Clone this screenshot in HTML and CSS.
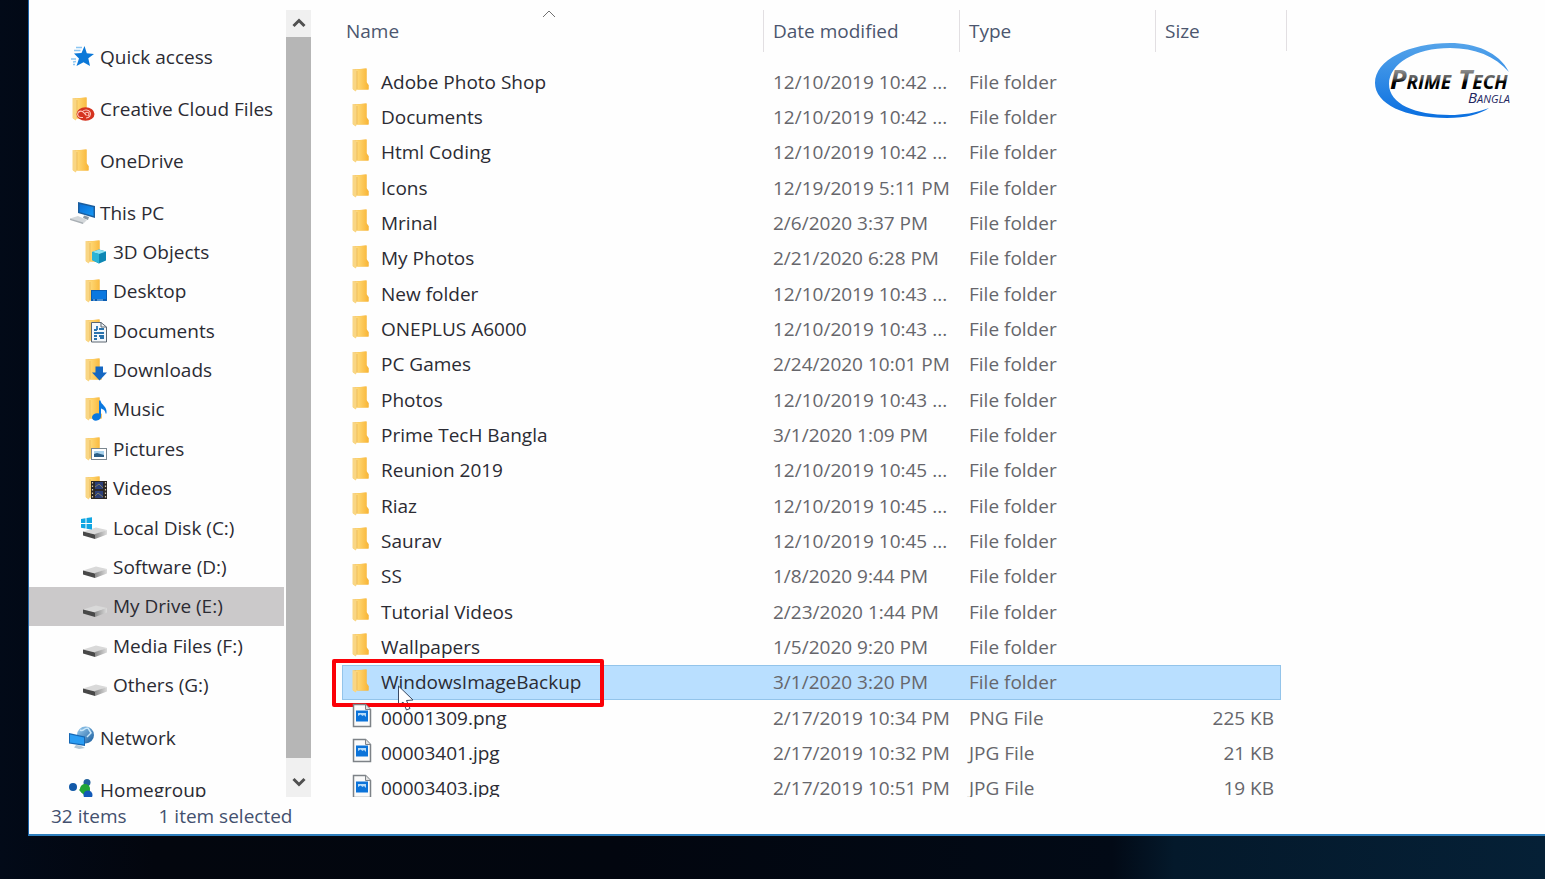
FILE: index.html
```
<!DOCTYPE html>
<html lang="en">
<head>
    <meta charset="utf-8">
    <title>My Drive (E:)</title>
    <link rel="stylesheet" href="styles.css">
</head>
<body>

<svg class="sprite" aria-hidden="true">
    <defs>
        <linearGradient id="gold"><stop offset="0" stop-color="#ffdc7d"/><stop offset="1" stop-color="#f9b535"/></linearGradient>
        <linearGradient id="blue" x2="1" y2="1"><stop offset="0" stop-color="#0a6fd6"/><stop offset="1" stop-color="#1698f5"/></linearGradient>
        <linearGradient id="steel"><stop offset="0" stop-color="#8a8a8a"/><stop offset="1" stop-color="#dcdcdc"/></linearGradient>
        <linearGradient id="globe" x2="1" y2="1"><stop offset="0" stop-color="#9fd0f2"/><stop offset="1" stop-color="#155a9c"/></linearGradient>
    </defs>
    <symbol id="folder" viewBox="0 0 26 26">
        <path d="M3 2.5 L16.500 1.500 V15 L18.500 18 V22.500 H3Z" fill="#f3b53c"/>
        <path d="M6 2.500 L16.500 1.500 V16 L18.500 18 V22.500 H7Z" fill="url(#gold)"/>
        <path d="M2.500 2 L7 3.500 V22.500 L5.500 24.500 L2.500 22Z" fill="#f9d684"/>
        <path d="M7 4 V22" stroke="#eab34a" stroke-width="0.700"/>
    </symbol>
    <symbol id="star" viewBox="0 0 26 26">
        <path d="M14.500 2 L16.800 9.300 L24 10 L18.300 14.300 L20 22 L13.500 18.300 L6.500 22 L9 14.500 L4 9.500 L11.500 9Z" fill="#0b78d8"/>
        <path d="M6 3.500 H12 M4 6.500 H10.500 M1 15 H6 M3 18 L6 17.500 M3 20.500 H5" stroke="#8cc6f2" stroke-width="1.300"/>
    </symbol>
    <symbol id="cc" viewBox="0 0 26 26">
        <use href="#folder"/>
        <ellipse cx="15.500" cy="18" rx="9" ry="6.800" fill="#d5331f"/>
        <path d="M13 21.500 H11 A3.200 3.200 0 1 1 13.500 16.500 L16.500 19.500 M12.500 15.500 A4.500 4 0 1 1 16 22 M15 18 A2 1.800 0 1 1 17.500 19.800" fill="none" stroke="#ffc9bd" stroke-width="1.100"/>
    </symbol>
    <symbol id="pc" viewBox="0 0 26 26">
        <path d="M8 2 L25 6 V18 L8 13Z" fill="#1b5d9d"/>
        <path d="M9.500 4 L23.500 7.200 V16 L9.500 12Z" fill="url(#blue)"/>
        <path d="M14 15.500 L19 17 L18 20 L13 18Z" fill="#8b98a3"/>
        <path d="M0 18.500 L8 16 L17 20 L13 24Z" fill="#d3d7da"/>
        <path d="M0 18.500 L13 22.500 V24 L0 20Z" fill="#a9afb4"/>
    </symbol>
    <symbol id="cube" viewBox="0 0 26 26">
        <use href="#folder"/>
        <path d="M9 13 L16 10.500 L23 12.500 V21.500 L16 24.500 L9 21Z" fill="#0d87b4"/>
        <path d="M9 13 L16 10.500 L23 12.500 L16 15Z" fill="#8be3f2"/>
        <path d="M9 13 L16 15 V24.500 L9 21Z" fill="#2ab4d6"/>
    </symbol>
    <symbol id="desk" viewBox="0 0 26 26">
        <use href="#folder"/>
        <rect x="8" y="12" width="16" height="11" fill="#0b5cb0"/>
        <rect x="9" y="13" width="14" height="8" fill="#0a78e0"/>
        <path d="M10 22 H12 M14 22 H20" stroke="#8cc4f5"/>
    </symbol>
    <symbol id="docs" viewBox="0 0 26 26">
        <use href="#folder"/>
        <path d="M8.500 4.500 H18 L23.500 9 V24 H8.500Z" fill="#f4f8fb" stroke="#5c6670"/>
        <path d="M18 4.500 V9 H23.500" fill="none" stroke="#5c6670"/>
        <path d="M11 12 H14 M14 8 V12 M16 11 H21 M11 15 H21 M11 18 H14 M16 18 H21 M11 21 H14 M17 20 H21" stroke="#2a73ad" stroke-width="1.800"/>
    </symbol>
    <symbol id="down" viewBox="0 0 26 26">
        <use href="#folder"/>
        <path d="M12.500 9.500 H20 V15.500 H24 L16.500 23.500 L9 15.500 H12.500Z" fill="#1467c2"/>
    </symbol>
    <symbol id="note" viewBox="0 0 26 26">
        <use href="#folder"/>
        <path d="M16 4.500 H17.500 C18 9 24.500 10 23.500 17.500 H22.500 C22.500 14 20 13.500 18 12.500 V20 C18 26 8.500 26 9 21 C9.500 17.500 13.500 16.500 16 17.500Z" fill="#0a78e0"/>
    </symbol>
    <symbol id="pics" viewBox="0 0 26 26">
        <use href="#folder"/>
        <rect x="8.500" y="12.500" width="15" height="11" fill="#fff" stroke="#7b8790"/>
        <rect x="11" y="15" width="10" height="6" fill="#a9d3ee"/>
        <path d="M11 21 V18 L14 17 L21 19 V21Z" fill="#2c5f86"/>
    </symbol>
    <symbol id="film" viewBox="0 0 26 26">
        <use href="#folder"/>
        <rect x="8" y="6" width="16" height="18" fill="#2b2725"/>
        <path d="M9.500 7 V24 M22.500 7 V24" stroke="#d9cdb4" stroke-width="1.200" stroke-dasharray="1.500 2"/>
        <path d="M12 7 H20 V14 H12Z M12 16 H20 V23 H12Z" fill="#2c3f78"/>
        <path d="M12 12 L16 9 L20 13 M12 21 L15 18 L20 22" stroke="#7e7c62" fill="none"/>
    </symbol>
    <symbol id="drive" viewBox="0 0 26 26">
        <path d="M0 16.500 L13 12.500 L24 15 L12 19.500Z" fill="#d9d9d9"/>
        <path d="M12 19 L24 15 V19.500 L12 24Z" fill="url(#steel)"/>
        <path d="M0 16.500 L12 19.500 V24 L0 20.500Z" fill="#484848"/>
    </symbol>
    <symbol id="windrive" viewBox="0 0 26 26">
        <use href="#drive"/>
        <path d="M-2 4 L2.500 3.300 V8 H-2Z M3.500 3.100 L9 2.300 V8 H3.500Z M-2 9 H2.500 V13.500 L-2 12.800Z M3.500 9 H9 V14.500 L3.500 13.700Z" fill="#10a6e2"/>
    </symbol>
    <symbol id="net" viewBox="0 0 26 26">
        <circle cx="15.500" cy="10" r="8.500" fill="url(#globe)"/>
        <path d="M10 5 C14 7 13 3 18 3 L21 8 L17 12" fill="none" stroke="#c9e7fa" stroke-width="1.500"/>
        <path d="M-1 8 L15 11.500 V21 L-1 18.500Z" fill="#1567b4"/>
        <path d="M0 9.500 L14 12.500 V19.500 L0 17.500Z" fill="#2a9df4"/>
        <path d="M6 20 L10 20.500 L15 23 L9 24 L4 22.500Z" fill="#b4c6d3"/>
    </symbol>
    <symbol id="home" viewBox="0 0 26 26">
        <path d="M9 13 L18 3 L21 20 L17 21Z" fill="#27a53c"/>
        <circle cx="3" cy="10" r="4" fill="#1259a8"/>
        <circle cx="17" cy="5.500" r="3.500" fill="#23629c"/>
        <circle cx="15" cy="12" r="5" fill="#23a636"/>
        <circle cx="18" cy="18" r="4.500" fill="#1259b8"/>
    </symbol>
    <symbol id="image" viewBox="0 0 26 26">
        <path d="M3.500 1.500 H15.500 L20.500 6.500 V23.500 H3.500Z" fill="#fafafa" stroke="#7d8287" stroke-width="1.500"/>
        <path d="M15.500 1.500 V6.500 H20.500" fill="#e0e0e0" stroke="#7d8287"/>
        <rect x="6" y="7.500" width="12" height="11" fill="#0b73d9"/>
        <path d="M8 10 H16 V14 L14 12 L12.500 13 L10.500 11.500 L8 13Z" fill="#b5daf8"/>
    </symbol>
</svg>

<main class="window">
    <div class="content">
        <nav class="sidebar">
            <ul class="tree">
                <li><a href="#"><svg class="icon"><use href="#star"/></svg>Quick access</a></li>
                <li><a href="#"><svg class="icon"><use href="#cc"/></svg>Creative Cloud Files</a></li>
                <li><a href="#"><svg class="icon"><use href="#folder"/></svg>OneDrive</a></li>
                <li>
                    <a href="#"><svg class="icon"><use href="#pc"/></svg>This PC</a>
                    <ul class="subtree">
                        <li><a href="#"><svg class="icon"><use href="#cube"/></svg>3D Objects</a></li>
                        <li><a href="#"><svg class="icon"><use href="#desk"/></svg>Desktop</a></li>
                        <li><a href="#"><svg class="icon"><use href="#docs"/></svg>Documents</a></li>
                        <li><a href="#"><svg class="icon"><use href="#down"/></svg>Downloads</a></li>
                        <li><a href="#"><svg class="icon"><use href="#note"/></svg>Music</a></li>
                        <li><a href="#"><svg class="icon"><use href="#pics"/></svg>Pictures</a></li>
                        <li><a href="#"><svg class="icon"><use href="#film"/></svg>Videos</a></li>
                        <li><a href="#"><svg class="icon"><use href="#windrive"/></svg>Local Disk (C:)</a></li>
                        <li><a href="#"><svg class="icon"><use href="#drive"/></svg>Software (D:)</a></li>
                        <li><a href="#" class="current"><svg class="icon"><use href="#drive"/></svg>My Drive (E:)</a></li>
                        <li><a href="#"><svg class="icon"><use href="#drive"/></svg>Media Files (F:)</a></li>
                        <li><a href="#"><svg class="icon"><use href="#drive"/></svg>Others (G:)</a></li>
                    </ul>
                </li>
                <li><a href="#"><svg class="icon"><use href="#net"/></svg>Network</a></li>
                <li><a href="#"><svg class="icon"><use href="#home"/></svg>Homegroup</a></li>
            </ul>
        </nav>

        <div class="scrollbar">
            <button class="arrow-up" aria-label="Scroll up"><svg width="14" height="10" viewBox="0 0 14 10"><path d="M1.500 8 L7 2.500 L12.500 8"/></svg></button>
            <div class="thumb"></div>
            <button class="arrow-down" aria-label="Scroll down"><svg width="14" height="10" viewBox="0 0 14 10"><path d="M1.500 2 L7 7.500 L12.500 2"/></svg></button>
        </div>

        <section class="files">
            <table>
                <thead>
                    <tr>
                        <th class="name"><span>Name</span><svg class="sort" width="14" height="8" viewBox="0 0 14 8"><path d="M1 7 L7 1 L13 7"/></svg></th>
                        <th class="date"><span>Date modified</span></th>
                        <th class="type"><span>Type</span></th>
                        <th class="size"><span>Size</span></th>
                    </tr>
                </thead>
                <tbody id="rows"></tbody>
            </table>
        </section>
    </div>

    <footer class="status"><span>32 items</span><span>1 item selected</span></footer>
</main>

<svg class="logo" width="140" height="78" viewBox="0 0 140 78">
    <defs>
        <linearGradient id="ring" x2="0" y2="1"><stop offset="0" stop-color="#55a4ea"/><stop offset="1" stop-color="#0a6fe0"/></linearGradient>
        <linearGradient id="chrome" x2="0" y2="1"><stop offset="0.200" stop-color="#a0a0a0"/><stop offset="0.500" stop-color="#555"/><stop offset="0.600" stop-color="#000"/></linearGradient>
    </defs>
    <path d="M134 30 C124 10 100 1 75 1 C34 1 0 18 0 41 C0 62 30 76 72 76 C92 76 105 72 114 66 C100 71 88 73 75 73 C40 73 14 62 14 42 C14 22 40 6 75 6 C100 6 120 14 134 30Z" fill="url(#ring)"/>
    <text class="brand" x="15" y="47" fill="url(#chrome)">P<tspan class="small">RIME</tspan></text>
    <text class="brand" x="83" y="47" fill="url(#chrome)">T<tspan class="small">ECH</tspan></text>
    <text class="region" x="93" y="61">B<tspan class="small">ANGLA</tspan></text>
</svg>

<script>
    const files = [
        ['Adobe Photo Shop', '12/10/2019 10:42 ...'],
        ['Documents', '12/10/2019 10:42 ...'],
        ['Html Coding', '12/10/2019 10:42 ...'],
        ['Icons', '12/19/2019 5:11 PM'],
        ['Mrinal', '2/6/2020 3:37 PM'],
        ['My Photos', '2/21/2020 6:28 PM'],
        ['New folder', '12/10/2019 10:43 ...'],
        ['ONEPLUS A6000', '12/10/2019 10:43 ...'],
        ['PC Games', '2/24/2020 10:01 PM'],
        ['Photos', '12/10/2019 10:43 ...'],
        ['Prime TecH Bangla', '3/1/2020 1:09 PM'],
        ['Reunion 2019', '12/10/2019 10:45 ...'],
        ['Riaz', '12/10/2019 10:45 ...'],
        ['Saurav', '12/10/2019 10:45 ...'],
        ['SS', '1/8/2020 9:44 PM'],
        ['Tutorial Videos', '2/23/2020 1:44 PM'],
        ['Wallpapers', '1/5/2020 9:20 PM'],
        ['WindowsImageBackup', '3/1/2020 3:20 PM'],
        ['00001309.png', '2/17/2019 10:34 PM', 'PNG File', '225 KB'],
        ['00003401.jpg', '2/17/2019 10:32 PM', 'JPG File', '21 KB'],
        ['00003403.jpg', '2/17/2019 10:51 PM', 'JPG File', '19 KB'],
    ]
    const selected = 'WindowsImageBackup'
    const marker = '<svg class="pointer" width="18" height="28" viewBox="0 0 18 28"><path d="M1.500 1 V21 L6 17 L9.500 25 L13 23.500 L9.500 15.500 L16 15Z"/></svg>'
        + '<span class="highlight"></span>'

    document.getElementById('rows').innerHTML = files.map(([name, date, type, size]) => `
        <tr class="${name === selected ? 'selected' : ''}">
            <td class="name"><div class="file"><svg class="icon"><use href="#${type ? 'image' : 'folder'}"/></svg>${name}</div>${name === selected ? marker : ''}</td>
            <td>${date}</td>
            <td>${type || 'File folder'}</td>
            <td class="size">${size || ''}</td>
        </tr>`).join('')
</script>
</body>
</html>
```
FILE: styles.css
```
* {
    box-sizing: border-box;
}

body {
    margin: 0;
    height: 100vh;
    overflow: hidden;
    padding: 0 0 43px 28px;
    font-family: "Open Sans", "Noto Sans", sans-serif;
    font-size: 19px;
    line-height: 24px;
    color: #2b2b33;
    background: linear-gradient(to right, #020a18 0%, #03060e 10%, #02060f 40%, #020a16 72%, #04192b 76%, #052036 100%);
}

ul {
    list-style: none;
    margin: 0;
    padding: 0;
}

a {
    color: inherit;
    text-decoration: none;
}

button {
    border: none;
    padding: 0;
    background-color: #f0f0f0;
}

.sprite {
    position: absolute;
    width: 0;
    height: 0;
}

.icon {
    width: 26px;
    height: 26px;
    flex: none;
    overflow: visible;
}
.icon use, symbol {
    overflow: visible;
}

.window {
    display: flex;
    flex-direction: column;
    height: 100%;
    background-color: #fefefe;
    border-left: 1px solid #1c63a8;
    border-bottom: 2px solid #2f7fbd;
}

.content {
    display: flex;
    flex: 1;
    min-height: 0;
    overflow: hidden;
}

/* navigation tree */
.sidebar {
    width: 257px;
    padding-top: 37px;
    overflow: hidden;
}
.tree {
    display: flex;
    flex-direction: column;
    gap: 13px;
}
.tree a {
    display: flex;
    align-items: center;
    gap: 4px;
    height: 39px;
    padding-left: 41px;
    white-space: nowrap;
}
.subtree {
    display: grid;
    grid-auto-rows: 1fr;
    height: 473px;
}
.subtree a {
    height: 100%;
    margin-right: 2px;
    padding-left: 54px;
}
.tree .current {
    background-color: #cbc9ca;
}

.scrollbar {
    display: flex;
    flex-direction: column;
    width: 25px;
    margin-top: 10px;
    background-color: #f0f0f0;
}
.scrollbar path {
    fill: none;
    stroke: #505050;
    stroke-width: 3;
}
.arrow-up {
    height: 27px;
}
.thumb {
    flex: 1;
    background-color: #b6b6b6;
}
.arrow-down {
    height: 39px;
    padding-top: 10px;
}

/* file list */
.files {
    flex: 1;
    padding-left: 31px;
    overflow: hidden;
}
table {
    table-layout: fixed;
    width: 939px;
    height: 806px;
    border-collapse: collapse;
}
thead tr {
    height: 63px;
}
th {
    position: relative;
    padding: 10px 0 12px 0;
    font-weight: normal;
    text-align: left;
    color: #4c566e;
}
th span {
    display: block;
    padding: 1px 0 0 9px;
    line-height: 41px;
    border-left: 1px solid #e2dfe2;
}
th.name {
    width: 421px;
}
th.name span {
    padding-left: 4px;
    border-left: none;
}
th.date, th.type {
    width: 196px;
}
th.size::after {
    content: "";
    position: absolute;
    top: 10px;
    right: -6px;
    height: 41px;
    border-left: 1px solid #e2dfe2;
}
.sort {
    position: absolute;
    top: 10px;
    left: 200px;
    fill: none;
    stroke: #707070;
}
td {
    padding: 0 0 0 10px;
    color: #66666b;
    white-space: nowrap;
}
td.name {
    position: relative;
    padding-left: 8px;
    color: #2b2b33;
}
td.size {
    padding-right: 7px;
    text-align: right;
}
.file {
    display: flex;
    align-items: center;
    gap: 5px;
}
.file .icon {
    margin-bottom: 3px;
}
.selected {
    background-color: #b9dfff;
    box-shadow: inset 0 0 0 1px #93c4ea;
}

.highlight {
    position: absolute;
    top: -6px;
    left: -10px;
    width: 272px;
    height: 48px;
    border: 4px solid #fb0007;
    border-radius: 2px;
}
.pointer {
    position: absolute;
    top: 20px;
    left: 55px;
    fill: #fff;
    stroke: #3a4a63;
}

.status {
    display: flex;
    gap: 32px;
    height: 37px;
    padding: 7px 0 0 22px;
    color: #43506e;
}

/* channel logo */
.logo {
    position: absolute;
    top: 42px;
    right: 30px;
    font-style: italic;
}
.brand {
    font-size: 27px;
    font-weight: bold;
}
.brand .small {
    font-size: 19px;
}
.region {
    font-size: 15px;
    fill: #22255f;
}
.region .small {
    font-size: 11px;
}
```
